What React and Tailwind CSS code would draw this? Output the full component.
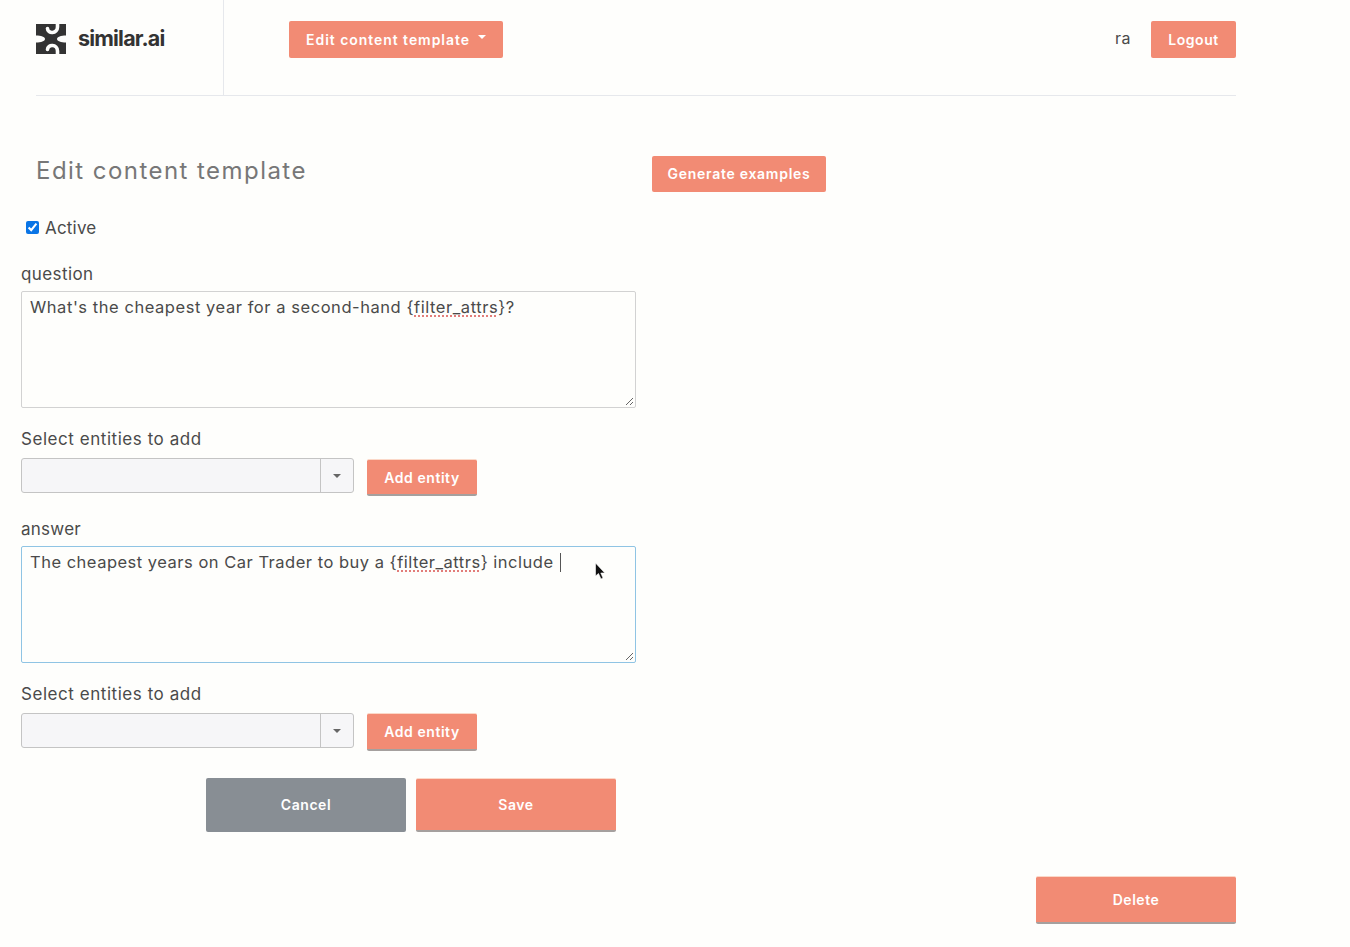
import { useState } from 'react'

const font = { fontFamily: 'Inter, "Open Sans", sans-serif' }

function Logo() {
  return (
    <div className="flex items-center gap-[12px]">
      <svg width="30" height="30" viewBox="0 0 30 30">
        <rect width="30" height="30" fill="#333333" />
        <path d="M21.5 0 V3 C21.5 10 11.5 10 11.5 4.5" fill="none" stroke="#fefefc" strokeWidth="3.6" strokeLinecap="round" />
        <path d="M21.5 30 V27 C21.5 20 11.5 20 11.5 25.5" fill="none" stroke="#fefefc" strokeWidth="3.6" strokeLinecap="round" />
        <path d="M0 11.5 C5 11.5 9 13 9 15 C9 17 5 18.5 0 18.5 Z" fill="#fefefc" />
        <path d="M30 11.5 C25 11.5 21 13 21 15 C21 17 25 18.5 30 18.5 Z" fill="#fefefc" />
      </svg>
      <span className="text-[21.5px] font-bold text-[#333333] tracking-[-0.8px] leading-none">similar.ai</span>
    </div>
  )
}

function Btn({ children, className = '' }) {
  return (
    <button className={`bg-[#f28b74] text-white text-[14px] font-semibold flex items-center justify-center rounded-[2px] ${className}`}>
      {children}
    </button>
  )
}

const raised = 'tracking-[0.55px] border-t border-t-[#fbd8c8] border-b-2 border-b-[#a5a09e]'

function ResizeGrip() {
  return (
    <svg className="absolute right-[1px] bottom-[1px]" width="9" height="9" viewBox="0 0 9 9">
      <path d="M1 8 L8 1 M5 8 L8 5" stroke="#666666" strokeWidth="1" />
    </svg>
  )
}

function Attr() {
  return (
    <>
      {'{'}
      <span className="underline decoration-dotted decoration-[#d9534f] underline-offset-[3px]">filter_attrs</span>
      {'}'}
    </>
  )
}

function EntitySelect({ btnClass = 'mt-px h-[37px]' }) {
  return (
    <div className="flex items-start mt-[7px]">
      <div className="w-[333px] h-[35px] flex bg-[#f6f6f8] border border-[#c4c4c4] rounded-[3px]">
        <div className="flex-1" />
        <div className="w-[33px] border-l border-[#c4c4c4] flex items-center justify-center">
          <div className="w-0 h-0 border-x-[4px] border-x-transparent border-t-[4px] border-t-[#666666]" />
        </div>
      </div>
      <Btn className={`ml-[13px] w-[110px] ${raised} ${btnClass}`}>Add entity</Btn>
    </div>
  )
}

export default function App() {
  const [active, setActive] = useState(true)

  return (
    <div className="min-h-[947px] bg-[#fefefc] text-[#4a4a4a] relative" style={font}>
      {/* Header */}
      <div className="ml-[36px] w-[1200px] h-[96px] border-b border-[#e6e8ec] flex">
        <div className="w-[188px] border-r border-[#e6e8ec] pt-[24px]">
          <Logo />
        </div>
        <div className="flex-1 flex items-start justify-between pt-[21px] pl-[65px]">
          <Btn className="w-[214px] h-[37px] pb-px tracking-[0.95px]">
            Edit content template
            <span className="ml-[8px] mb-[5px] w-0 h-0 border-x-[4.5px] border-x-transparent border-t-[4.5px] border-t-white" />
          </Btn>
          <div className="flex items-center">
            <span className="text-[16px] mr-[20px] tracking-[0.5px] -mt-[3px]">ra</span>
            <Btn className="w-[85px] h-[37px] pb-px tracking-[0.55px]">Logout</Btn>
          </div>
        </div>
      </div>

      {/* Title row */}
      <div className="flex items-start mt-[60px] ml-[36px]">
        <h1 className="w-[616px] text-[24px] leading-[30px] text-[#777777] tracking-[1.45px]">Edit content template</h1>
        <Btn className="w-[174px] h-[36px] pb-px tracking-[0.72px]">Generate examples</Btn>
      </div>

      {/* Form */}
      <div className="ml-[21px] w-[615px] mt-[24px]">
        <label className="flex items-center ml-[5px] h-[24px] text-[17px] tracking-[0.2px]">
          <input
            type="checkbox"
            checked={active}
            onChange={() => setActive(!active)}
            className="w-[13px] h-[13px] mr-[6px] -mt-[2px] accent-[#0a75e6]"
          />
          <span className="mt-[1px]">Active</span>
        </label>

        <div className="mt-[22px] text-[17px] leading-[24px] tracking-[0.4px]">question</div>
        <div className="relative mt-[5px] h-[117px] border border-[#d2d2d2] rounded-[2px] px-[8px] py-[3px] text-[16.5px] leading-[24px] tracking-[0.55px]">
          What's the cheapest year for a second-hand <Attr />?
          <ResizeGrip />
        </div>

        <div className="mt-[19px] text-[17px] leading-[24px] tracking-[0.55px]">Select entities to add</div>
        <EntitySelect />

        <div className="mt-[21px] text-[17px] leading-[24px] tracking-[0.25px]">answer</div>
        <div className="relative mt-[5px] h-[117px] border border-[#8fc4e4] rounded-[2px] px-[8px] py-[3px] text-[16.5px] leading-[24px] tracking-[0.5px]">
          The cheapest years on Car Trader to buy a <Attr /> include <span className="inline-block w-px h-[19px] bg-[#555555] align-[-4px] ml-[1px]" />
          <ResizeGrip />
          <svg className="absolute left-[572px] top-[15px]" width="12" height="20" viewBox="0 0 12 20">
            <path d="M1.5 1 V14 L4.5 11.5 L7 17 L9 16 L6.8 11 H10.8 Z" fill="#111111" stroke="#ffffff" strokeWidth="0.6" />
          </svg>
        </div>

        <div className="mt-[19px] text-[17px] leading-[24px] tracking-[0.55px]">Select entities to add</div>
        <EntitySelect btnClass="h-[38px]" />

        <div className="flex mt-[27px] ml-[185px] gap-[10px]">
          <Btn className="w-[200px] h-[54px] pb-px tracking-[0.55px] !bg-[#888e94]">Cancel</Btn>
          <Btn className={`w-[200px] h-[54px] ${raised}`}>Save</Btn>
        </div>
      </div>

      <div className="ml-[1036px] mt-[44px]">
        <Btn className={`w-[200px] h-[48px] ${raised}`}>Delete</Btn>
      </div>
    </div>
  )
}
